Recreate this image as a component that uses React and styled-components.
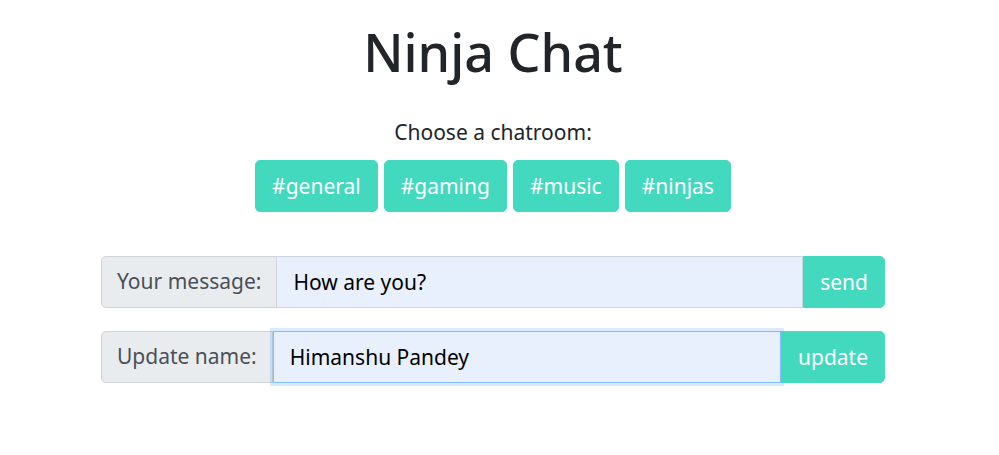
import styled, { createGlobalStyle } from "styled-components";

const GlobalStyle = createGlobalStyle`
  body {
    margin: 0;
    background: #fff;
    color: #212529;
    font-family: "Noto Sans", "Open Sans", sans-serif;
    line-height: 1.5;
  }
`;

const Teal = "#43d9be";

const Main = styled.main`
  width: 784px;
  margin-left: 101px;
  padding-top: 21px;
`;

const Title = styled.h1`
  margin: 0 0 34px;
  text-align: center;
  font-size: 52px;
  font-weight: 500;
  line-height: 1.2;
  color: #212529;
`;

const Rooms = styled.section`
  display: flex;
  flex-direction: column;
  align-items: center;
  margin-bottom: 44px;
`;

const Prompt = styled.p`
  margin: 0 0 11px;
  font-size: 21px;
  color: #212529;
`;

const RoomList = styled.div`
  display: flex;
  gap: 6px;
`;

const RoomButton = styled.button`
  height: 52px;
  padding: 0 16px;
  border: 1px solid ${Teal};
  border-radius: 5px;
  background: ${Teal};
  color: #fff;
  font-family: inherit;
  font-size: 21px;
  cursor: pointer;
`;

const Form = styled.form`
  display: flex;
  height: 52px;
  margin-bottom: 23px;
`;

const Label = styled.label`
  display: flex;
  align-items: center;
  padding: 0 15px;
  border: 1px solid #ced4da;
  border-radius: 5px 0 0 5px;
  background: #e9ecef;
  color: #495057;
  font-size: 21px;
  white-space: nowrap;
`;

const Input = styled.input`
  flex: 1;
  min-width: 0;
  padding: 0 16px;
  border: 1px solid ${(p) => (p.focused ? "#80bdff" : "#ced4da")};
  border-left: ${(p) => (p.focused ? "1px solid #80bdff" : "none")};
  background: #e8f0fe;
  color: #000;
  font-family: inherit;
  font-size: 21px;
  outline: none;
  box-shadow: ${(p) => (p.focused ? "0 0 0 3px rgba(0, 123, 255, 0.15)" : "none")};
  position: relative;
  z-index: 1;
`;

const Submit = styled.button`
  position: relative;
  z-index: 2;
  padding: 0 16px;
  border: 1px solid ${Teal};
  border-radius: 0 5px 5px 0;
  background: ${Teal};
  color: #fff;
  font-family: inherit;
  font-size: 21px;
  cursor: pointer;
`;

const rooms = ["general", "gaming", "music", "ninjas"];

export default function App() {
  return (
    <>
      <GlobalStyle />
      <Main>
        <Title>Ninja Chat</Title>
        <Rooms>
          <Prompt>Choose a chatroom:</Prompt>
          <RoomList>
            {rooms.map((room) => (
              <RoomButton key={room}>#{room}</RoomButton>
            ))}
          </RoomList>
        </Rooms>
        <Form onSubmit={(e) => e.preventDefault()}>
          <Label htmlFor="message">Your message:</Label>
          <Input id="message" defaultValue="How are you?" />
          <Submit>send</Submit>
        </Form>
        <Form onSubmit={(e) => e.preventDefault()}>
          <Label htmlFor="name">Update name:</Label>
          <Input id="name" focused defaultValue="Himanshu Pandey" />
          <Submit>update</Submit>
        </Form>
      </Main>
    </>
  );
}
